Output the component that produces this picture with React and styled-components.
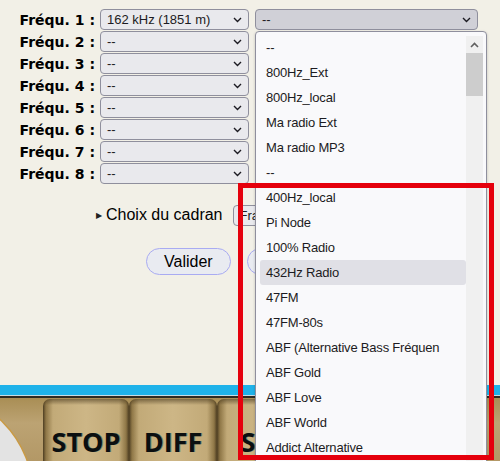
import React from "react";
import styled, { createGlobalStyle } from "styled-components";

const GlobalStyle = createGlobalStyle`
    body {
        margin: 0;
        background-color: #f2f0e7;
        font-family: "Liberation Sans", Arial, sans-serif;
    }
`;

const Page = styled.div`
    position: relative;
    width: 500px;
    height: 461px;
    overflow: hidden;
    display: flex;
    flex-direction: column;
`;

const FreqList = styled.div`
    display: flex;
    flex-direction: column;
    gap: 1px;
    padding-top: 9px;
`;

const FreqRow = styled.div`
    display: flex;
    align-items: center;
    height: 21px;
`;

const Label = styled.label`
    width: 95px;
    padding-right: 5px;
    text-align: right;
    font-family: "DejaVu Sans", Verdana, sans-serif;
    font-weight: bold;
    font-size: 14px;
    color: #000;
    white-space: nowrap;
`;

const SelectBox = styled.div`
    box-sizing: border-box;
    display: flex;
    align-items: center;
    justify-content: space-between;
    width: ${(p) => p.$width}px;
    height: 21px;
    margin-left: ${(p) => p.$gap || 0}px;
    padding: 0 6px 0 6px;
    border: 1px solid #8f8f9d;
    border-radius: 4px;
    background-color: ${(p) => (p.$open ? "#d0d0d7" : "#e9e9ed")};
    color: #1c1b22;
    font-size: 13px;
    white-space: nowrap;
    overflow: hidden;
`;

const Chevron = () => (
    <svg width="9" height="6" viewBox="0 0 9 6">
        <path d="M1 1 L4.5 4.5 L8 1" fill="none" stroke="#1c1b22" strokeWidth="1.4" />
    </svg>
);

const Select = ({ value, width, gap, open }) => (
    <SelectBox $width={width} $gap={gap} $open={open}>
        <span>{value}</span>
        <Chevron />
    </SelectBox>
);

const ChoixRow = styled.div`
    display: flex;
    align-items: center;
    margin-top: 20px;
    padding-left: 96px;
    height: 22px;
`;

const Marker = styled.span`
    font-size: 8px;
    color: #222;
    margin-right: 4px;
`;

const Summary = styled.span`
    font-size: 16px;
    color: #000;
    margin-right: 10px;
`;

const ButtonRow = styled.div`
    display: flex;
    gap: 16px;
    margin-top: 22px;
    padding-left: 146px;
`;

const Button = styled.button`
    height: 27px;
    padding: 0 17px;
    border: 1px solid #a9abf2;
    border-radius: 14px;
    background-color: #e9ebf1;
    font-family: "Liberation Sans", Arial, sans-serif;
    font-size: 16px;
    color: #000;
`;

const Spacer = styled.div`
    flex: 1;
`;

const RadioPanel = styled.div`
    position: relative;
    height: 76px;
    display: flex;
    flex-direction: column;
`;

const BlueBar = styled.div`
    height: 10px;
    background-color: #1fb2e9;
    border-bottom: 1px solid #c9dbe2;
`;

const DarkLine = styled.div`
    height: 2px;
    background-color: #2e2a22;
`;

const GoldArea = styled.div`
    position: relative;
    flex: 1;
    display: flex;
    padding-left: 43px;
    background: linear-gradient(180deg, #a98e55 0%, #bca373 40%, #b39866 100%);
`;

const Tile = styled.div`
    box-sizing: border-box;
    width: ${(p) => p.$width}px;
    margin-top: 1px;
    display: flex;
    align-items: flex-end;
    justify-content: center;
    padding-bottom: 6px;
    border-radius: 7px 7px 0 0;
    background:
        linear-gradient(180deg, rgba(60, 45, 20, 0.55) 0px, rgba(60, 45, 20, 0) 6px),
        linear-gradient(90deg, #4e3e22 0px, #8f7747 3px, #c2aa78 10px, #cdb686 50%, #c2aa78 calc(100% - 10px), #8f7747 calc(100% - 3px), #4e3e22 100%);
    font-family: "Open Sans", "Noto Sans", sans-serif;
    font-weight: bold;
    font-size: 27px;
    line-height: 1;
    color: #0b0f10;
    text-shadow: 1px 0 0 rgba(20, 80, 90, 0.45);
`;

const Dial = styled.svg`
    position: absolute;
    left: 0;
    top: 0;
`;

const Dropdown = styled.div`
    position: absolute;
    left: 255px;
    top: 31px;
    width: 232px;
    height: 440px;
    box-sizing: border-box;
    display: flex;
    padding: 3px 3px 0 4px;
    border: 1px solid #8f8f9d;
    border-radius: 4px;
    background-color: #f9f9fb;
    box-shadow: 0 1px 3px rgba(0, 0, 0, 0.2);
`;

const OptionList = styled.div`
    flex: 1;
    display: flex;
    flex-direction: column;
`;

const Option = styled.div`
    height: 25px;
    display: flex;
    align-items: center;
    padding-left: 6px;
    border-radius: 3px;
    background-color: ${(p) => (p.$active ? "#e0e0e6" : "transparent")};
    color: #1c1b22;
    font-size: 13px;
    letter-spacing: -0.2px;
    white-space: nowrap;
    overflow: hidden;
`;

const Scrollbar = styled.div`
    width: 17px;
    margin-top: 1px;
    display: flex;
    flex-direction: column;
    background-color: #f0f0f0;
`;

const ScrollButton = styled.div`
    height: 17px;
    display: flex;
    align-items: center;
    justify-content: center;
`;

const Thumb = styled.div`
    height: 43px;
    background-color: #cdcdcd;
`;

const Annotation = styled.div`
    position: absolute;
    left: 238px;
    top: 183px;
    width: 256px;
    height: 277px;
    box-sizing: border-box;
    border: 5px solid #e5000c;
    pointer-events: none;
`;

const options = [
    "--",
    "800Hz_Ext",
    "800Hz_local",
    "Ma radio Ext",
    "Ma radio MP3",
    "--",
    "400Hz_local",
    "Pi Node",
    "100% Radio",
    "432Hz Radio",
    "47FM",
    "47FM-80s",
    "ABF (Alternative Bass Fréquen",
    "ABF Gold",
    "ABF Love",
    "ABF World",
    "Addict Alternative",
];

const tiles = [
    { text: "STOP", width: 86 },
    { text: "DIFF", width: 88 },
    { text: "SW", width: 88 },
    { text: "MW", width: 88 },
    { text: "LW", width: 88 },
];

const App = () => {
    const freqs = [1, 2, 3, 4, 5, 6, 7, 8];

    return (
        <Page>
            <GlobalStyle />
            <FreqList>
                {freqs.map((n) => (
                    <FreqRow key={n}>
                        <Label>Fréqu. {n} :</Label>
                        <Select value={n === 1 ? "162 kHz (1851 m)" : "--"} width={149} />
                        {n === 1 && <Select value="--" width={223} gap={6} open />}
                    </FreqRow>
                ))}
            </FreqList>

            <ChoixRow>
                <Marker>▶</Marker>
                <Summary>Choix du cadran</Summary>
                <Select value="Français" width={130} />
            </ChoixRow>

            <ButtonRow>
                <Button>Valider</Button>
                <Button>Annuler</Button>
            </ButtonRow>

            <Spacer />

            <RadioPanel>
                <BlueBar />
                <DarkLine />
                <GoldArea>
                    <Dial width="43" height="63" viewBox="0 0 43 63">
                        <circle cx="-70" cy="97" r="103" fill="#e3e3e3" stroke="#c99a45" strokeWidth="1.5" />
                    </Dial>
                    {tiles.map((t) => (
                        <Tile key={t.text} $width={t.width}>{t.text}</Tile>
                    ))}
                </GoldArea>
            </RadioPanel>

            <Dropdown>
                <OptionList>
                    {options.map((o, i) => (
                        <Option key={i} $active={o === "432Hz Radio"}>{o}</Option>
                    ))}
                </OptionList>
                <Scrollbar>
                    <ScrollButton>
                        <svg width="9" height="6" viewBox="0 0 9 6">
                            <path d="M1 5 L4.5 1.5 L8 5" fill="none" stroke="#606060" strokeWidth="1.6" />
                        </svg>
                    </ScrollButton>
                    <Thumb />
                </Scrollbar>
            </Dropdown>

            <Annotation />
        </Page>
    );
};

export default App;
